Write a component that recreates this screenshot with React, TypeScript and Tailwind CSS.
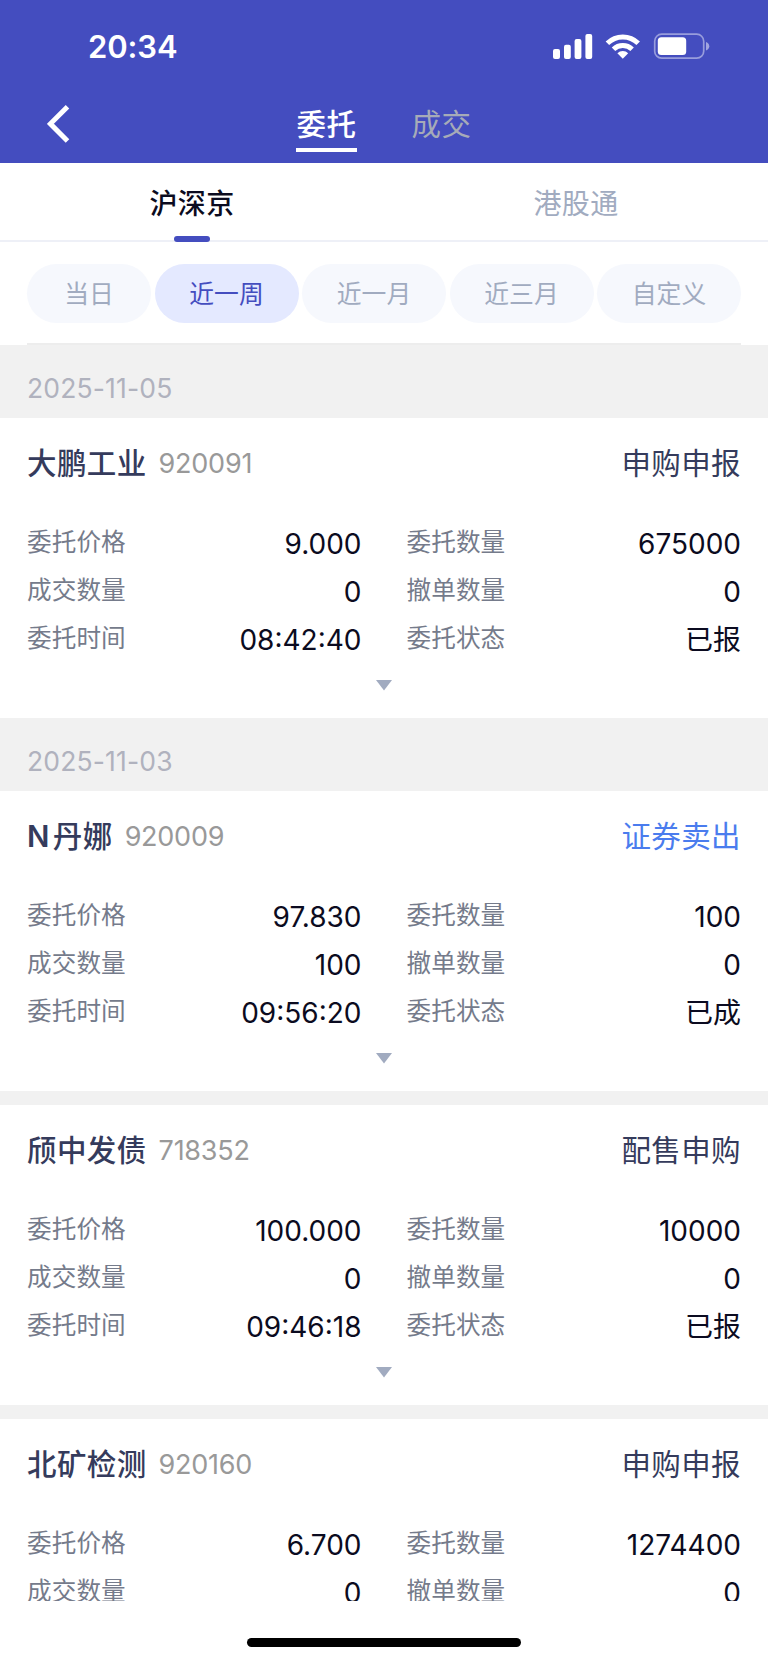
import { useState } from "react";

type Order = {
  prefix?: string;
  name: string;
  code: string;
  action: string;
  sell?: boolean;
  price: string;
  amount: string;
  filled: string;
  cancelled: string;
  time: string;
  status: string;
};

const groups: { date: string; orders: Order[] }[] = [
  {
    date: "2025-11-05",
    orders: [
      { name: "大鹏工业", code: "920091", action: "申购申报", price: "9.000", amount: "675000", filled: "0", cancelled: "0", time: "08:42:40", status: "已报" },
    ],
  },
  {
    date: "2025-11-03",
    orders: [
      { prefix: "N", name: "丹娜", code: "920009", action: "证券卖出", sell: true, price: "97.830", amount: "100", filled: "100", cancelled: "0", time: "09:56:20", status: "已成" },
      { name: "颀中发债", code: "718352", action: "配售申购", price: "100.000", amount: "10000", filled: "0", cancelled: "0", time: "09:46:18", status: "已报" },
      { name: "北矿检测", code: "920160", action: "申购申报", price: "6.700", amount: "1274400", filled: "0", cancelled: "0", time: "", status: "" },
    ],
  },
];

const ranges = ["当日", "近一周", "近一月", "近三月", "自定义"];

function StatusBar() {
  return (
    <div className="flex h-[92px] items-center justify-between pl-[88px] pr-[58px]">
      <span className="text-[31px] leading-none font-semibold tracking-[-0.1px]">20:34</span>
      <svg width="158" height="28" viewBox="552 31 158 28" fill="white">
        <rect x="553" y="48" width="7" height="10" rx="2" />
        <rect x="564" y="43.7" width="6.8" height="14.3" rx="2" />
        <rect x="574.6" y="38" width="6.8" height="20" rx="2" />
        <rect x="585.4" y="33" width="6.8" height="25" rx="2" />
        <g fill="none" stroke="white" strokeWidth="5">
          <path d="M607.4 42.2a22 22 0 0 1 30.8 0" />
          <path d="M613.5 48.2a13.4 13.4 0 0 1 18.6 0" />
        </g>
        <path d="M617.4 52.2a7.8 7.8 0 0 1 10.8 0l-5.4 5.5z" />
        <rect x="654.7" y="33.2" width="49" height="24" rx="7" fill="none" stroke="white" strokeOpacity="0.45" strokeWidth="1.7" />
        <rect x="657.8" y="36.3" width="28.4" height="17.8" rx="3.5" />
        <path d="M706 41v8.6c4.4-1.6 4.4-7 0-8.6z" fillOpacity="0.5" />
      </svg>
    </div>
  );
}

function Field({ label, value }: { label: string; value: string }) {
  return (
    <div className="flex h-12 items-center justify-between">
      <span className="text-[24.6px] leading-none tracking-[0.1px] text-[#757b8b]">{label}</span>
      <span className="pt-1 text-[28px] leading-none text-[#0b0b20]">{value}</span>
    </div>
  );
}

function OrderCard({ order }: { order: Order }) {
  return (
    <div className="h-[300px] shrink-0 bg-white px-[27px]">
      <div className="flex h-[100px] items-center justify-between pb-2 text-[29.5px] leading-none tracking-[0.4px] text-[#353b5c]">
        <div className="flex items-center">
          {order.prefix && <span className="mr-[3px] font-semibold">{order.prefix}</span>}
          <span className="font-medium">{order.name}</span>
          <span className="ml-3 pb-[2px] text-[27px] tracking-[-0.25px] text-[#999999]">{order.code}</span>
        </div>
        <span className={order.sell ? "text-[#4a7cee]" : ""}>{order.action}</span>
      </div>
      <div className="grid grid-cols-[334.5px_334.5px] justify-between">
        <Field label="委托价格" value={order.price} />
        <Field label="委托数量" value={order.amount} />
        <Field label="成交数量" value={order.filled} />
        <Field label="撤单数量" value={order.cancelled} />
        {order.time && <Field label="委托时间" value={order.time} />}
        {order.status && <Field label="委托状态" value={order.status} />}
      </div>
      <svg className="mx-auto mt-[18px]" width="16" height="11" viewBox="0 0 16 11">
        <path d="M0 0h16L8 10.5z" fill="#a1abc0" />
      </svg>
    </div>
  );
}

export default function App() {
  const [range, setRange] = useState("近一周");

  return (
    <div className="flex h-[1662px] w-[768px] flex-col overflow-hidden bg-white font-['Inter','Noto_Sans_CJK_SC',sans-serif]">
      <header className="h-[163px] shrink-0 bg-[#444dbf] text-white">
        <StatusBar />
        <div className="flex h-[71px] items-start pl-[47px]">
          <svg className="mt-[13px]" width="23" height="38" viewBox="0 0 23 38" fill="none" stroke="white" strokeWidth="5">
            <path d="M20.5 1.8L3.4 18.8l17.1 17.1" />
          </svg>
          <div className="ml-[226px] flex gap-[54px] text-[29.5px] leading-none tracking-[0.4px]">
            <button className="h-[60px] w-[61px] border-b-4 border-white pt-[9px] font-medium">委托</button>
            <button className="h-[60px] w-[61px] border-b-4 border-transparent pt-[9px] text-[#a6abb8]">成交</button>
          </div>
        </div>
      </header>

      <nav className="flex h-[79px] shrink-0 border-b-2 border-[#eef0f7] text-[28px] leading-none tracking-[0.3px]">
        <button className="relative flex-1 pt-[5px] font-medium text-[#0b0b20]">
          沪深京
          <span className="absolute -bottom-[2px] left-1/2 h-[6px] w-9 -translate-x-1/2 rounded-[3px] bg-[#444dbf]" />
        </button>
        <button className="flex-1 pt-[5px] text-[#a1abc0]">港股通</button>
      </nav>

      <div className="mx-[27px] flex h-[103px] shrink-0 gap-[3.5px] border-b-2 border-[#ededed] pt-[22px]">
        {ranges.map((item) => (
          <button
            key={item}
            onClick={() => setRange(item)}
            className={`h-[59px] rounded-full pt-[2px] text-[24.8px] leading-none first:w-[124px] not-first:flex-1 ${
              item === range ? "bg-[#e4e9ff] text-[#444dbf]" : "bg-[#f6f8fd] text-[#a1abc0]"
            }`}
          >
            {item}
          </button>
        ))}
      </div>

      <main className="h-[1256px] shrink-0 overflow-hidden bg-[#f1f1f1]">
        {groups.map((group) => (
          <section key={group.date}>
            <div className="flex h-[73px] items-center px-[27px] pt-[14px] text-[26.5px] leading-none tracking-[0.15px] text-[#b0b2be]">
              {group.date}
            </div>
            <div className="flex flex-col gap-[14px]">
              {group.orders.map((order) => (
                <OrderCard key={order.code} order={order} />
              ))}
            </div>
          </section>
        ))}
      </main>

      <div className="flex justify-center bg-white pt-[37px]">
        <div className="h-[9px] w-[274px] rounded-full bg-black" />
      </div>
    </div>
  );
}
